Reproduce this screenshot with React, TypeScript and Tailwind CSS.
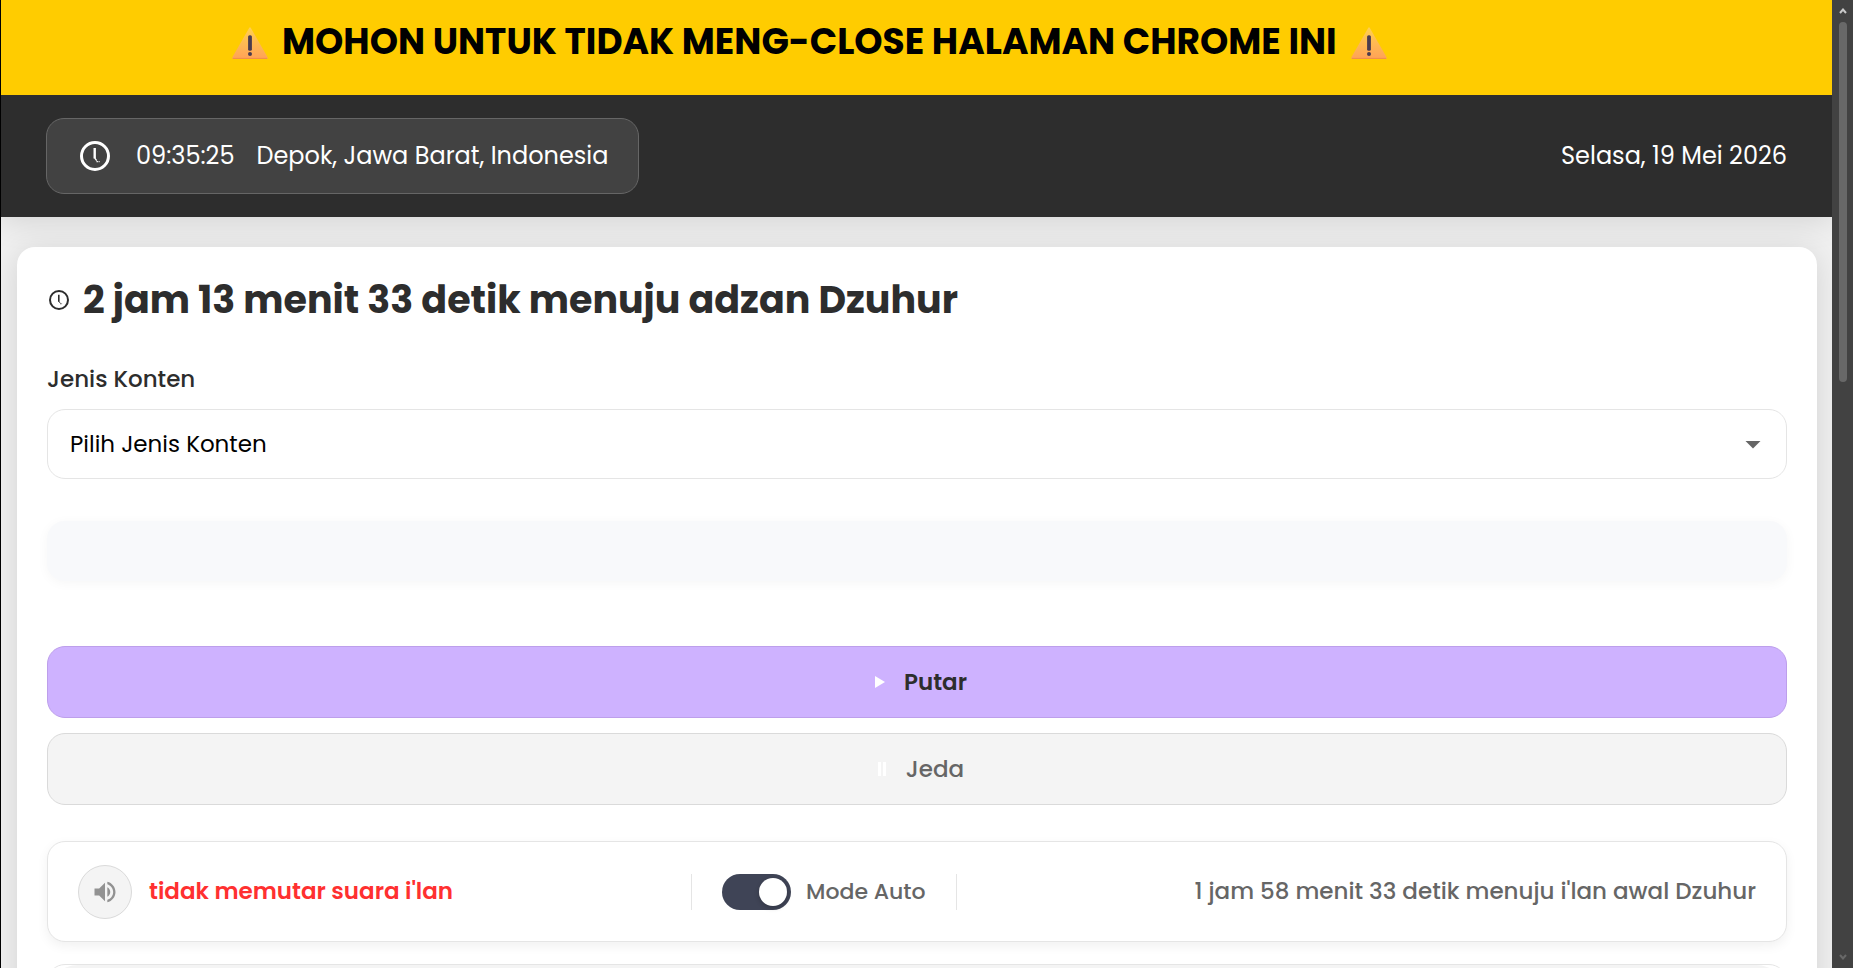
import { useState } from 'react'

function WarningIcon() {
  return (
    <svg className="mt-[11px] h-8 w-9 shrink-0" viewBox="0 0 36 32" aria-hidden="true">
      <defs>
        <linearGradient id="warning" x1="0" y1="0" x2="0" y2="1">
          <stop offset="0" stopColor="#ffd04f" />
          <stop offset="1" stopColor="#ffa257" />
        </linearGradient>
      </defs>
      <path d="M17 1.2Q18 -.6 19 1.2L35.6 30.2Q36.2 32 34.5 32h-33Q-.2 32 .4 30.2z" fill="url(#warning)" />
      <path d="M.8 31.4h34.4" stroke="#f08c4e" strokeWidth="1" />
      <rect x="16.1" y="8.2" width="3.8" height="15.6" rx="1.6" fill="#4b3b4e" />
      <circle cx="18" cy="27" r="2" fill="#4b3b4e" />
    </svg>
  )
}

function ClockIcon({ className }: { className?: string }) {
  return (
    <svg className={className} viewBox="0 0 30 30" fill="none" stroke="currentColor" aria-hidden="true">
      <circle cx="15" cy="15" r="13.5" strokeWidth="3" />
      <path d="M14.7 7v10.5" strokeWidth="2.4" />
      <path d="M14.7 17l2 2.6M16.5 20.6h1.4M18.6 20.6h1" strokeWidth="1.3" />
    </svg>
  )
}

function SpeakerIcon() {
  return (
    <svg className="h-7 w-7" viewBox="0 0 24 24" fill="currentColor" aria-hidden="true">
      <path d="M3 9v6h4l5 5V4L7 9H3zm13.5 3c0-1.77-1.02-3.29-2.5-4.03v8.05c1.48-.73 2.5-2.25 2.5-4.02zM14 3.23v2.06c2.89.86 5 3.54 5 6.71s-2.11 5.85-5 6.71v2.06c4.01-.91 7-4.49 7-8.77s-2.99-7.86-7-8.77z" />
    </svg>
  )
}

function Scrollbar() {
  return (
    <div className="flex w-[21px] shrink-0 flex-col items-center justify-between bg-[#424242] py-2" aria-hidden="true">
      <div className="flex min-h-0 flex-1 flex-col items-center gap-2">
        <svg className="h-[6px] w-2" viewBox="0 0 8 6" fill="none" stroke="#c8c8c8" strokeWidth="2">
          <path d="M1 5l3-3.5L7 5" />
        </svg>
        <div className="h-[360px] w-2 rounded-full bg-[#686868]" />
      </div>
      <svg className="h-[6px] w-2" viewBox="0 0 8 6" fill="none" stroke="#686868" strokeWidth="2">
        <path d="M1 1l3 3.5L7 1" />
      </svg>
    </div>
  )
}

export default function App() {
  const [auto, setAuto] = useState(true)

  return (
    <div className="flex h-screen overflow-hidden bg-[#f0f0f0] font-['Poppins','Inter',sans-serif] text-[#2d2d2d]">
      <div className="min-w-0 flex-1 overflow-hidden border-l border-black">
        <div className="relative z-10 flex h-[95px] items-start gap-[14px] overflow-hidden bg-[#ffcc00] pt-4 pl-[231px] whitespace-nowrap text-black">
          <WarningIcon />
          <p className="text-[36px] leading-[52px] font-bold">MOHON UNTUK TIDAK MENG-CLOSE HALAMAN CHROME INI</p>
          <WarningIcon />
        </div>

        <header className="relative flex items-center justify-between bg-[#2d2d2d] px-[45px] py-[23px] text-[24px] leading-9 text-white shadow-[0_4px_30px_rgba(0,0,0,0.12)]">
          <div className="flex h-[76px] items-center rounded-[18px] border border-[#666] bg-[#424242] pr-[30px] pl-[33px]">
            <ClockIcon className="mr-[26px] h-[30px] w-[30px]" />
            <span className="mr-[22px]">09:35:25</span>
            <span>Depok, Jawa Barat, Indonesia</span>
          </div>
          <span>Selasa, 19 Mei 2026</span>
        </header>

        <main className="mr-[15px] ml-4 mt-[30px] rounded-[18px] bg-white px-[30px] pt-[25px] pb-8 shadow-[0_4px_30px_rgba(0,0,0,0.12)]">
          <h1 className="flex items-center gap-[14px] text-[38px] leading-[56px] font-bold">
            <ClockIcon className="ml-[2px] h-5 w-5" />
            2 jam 13 menit 33 detik menuju adzan Dzuhur
          </h1>

          <label htmlFor="jenis" className="mt-[33px] mb-3 block text-[23px] leading-9 font-medium">
            Jenis Konten
          </label>
          <div className="relative">
            <select
              id="jenis"
              className="block h-[70px] w-full appearance-none rounded-[18px] border border-[#e5e5e5] bg-white px-[22px] text-[23px] text-black"
            >
              <option>Pilih Jenis Konten</option>
            </select>
            <svg className="pointer-events-none absolute top-8 right-[26px] h-2 w-4" viewBox="0 0 16 8" fill="#666" aria-hidden="true">
              <path d="M.5 0h15L8 7.5z" />
            </svg>
          </div>

          <div className="mt-[42px] h-[60px] rounded-[18px] bg-[#f8f9fb] shadow-[0_2px_12px_rgba(0,0,0,0.04)]" />

          <button
            type="button"
            className="mt-[65px] flex h-[72px] w-full items-center justify-center gap-[19px] rounded-[18px] border border-[#bd9feb] bg-[#ceb2ff] text-[23px] font-semibold"
          >
            <svg className="h-3 w-[18px]" viewBox="-8 0 18 12" fill="white" aria-hidden="true">
              <path d="M0 0l10 6-10 6z" />
            </svg>
            Putar
          </button>
          <button
            type="button"
            className="mt-[15px] flex h-[72px] w-full items-center justify-center gap-5 rounded-[18px] border border-[#dadada] bg-[#f4f4f4] text-[23px] font-medium text-[#666]"
          >
            <svg className="h-[14px] w-4" viewBox="-8 0 16 14" fill="white" aria-hidden="true">
              <path d="M0 0h3v14H0zM5 0h3v14H5z" />
            </svg>
            Jeda
          </button>

          <section className="mt-9 flex h-[101px] items-center justify-between rounded-[18px] border border-[#e5e5e5] bg-white px-[30px] text-[23px] font-medium text-[#666] shadow-[0_4px_12px_rgba(0,0,0,0.06)]">
            <div className="flex items-center gap-[17px]">
              <button
                type="button"
                aria-label="Suara"
                className="flex h-[54px] w-[54px] items-center justify-center rounded-full border border-[#dadada] bg-[#f4f4f4] text-[#929292]"
              >
                <SpeakerIcon />
              </button>
              <span className="font-semibold text-[#ff3030]">tidak memutar suara i'lan</span>
            </div>
            <label className="flex h-9 cursor-pointer items-center gap-[15px] border-x border-[#e5e5e5] px-[30px] text-[22px]">
              <input type="checkbox" className="peer sr-only" checked={auto} onChange={(e) => setAuto(e.target.checked)} />
              <span className="flex h-9 w-[69px] items-center rounded-full bg-[#bbb] p-1 peer-checked:justify-end peer-checked:bg-[#3f4456]">
                <span className="h-7 w-7 rounded-full bg-white shadow-[0_2px_5px_rgba(0,0,0,0.2)]" />
              </span>
              Mode Auto
            </label>
            <span>1 jam 58 menit 33 detik menuju i'lan awal Dzuhur</span>
          </section>

          <section className="mt-[22px] h-[101px] overflow-hidden rounded-[18px] border border-[#e5e5e5] bg-white">
            <div className="h-full rounded-[30px] bg-[#f4f4f4]" />
          </section>
        </main>
      </div>
      <Scrollbar />
    </div>
  )
}
